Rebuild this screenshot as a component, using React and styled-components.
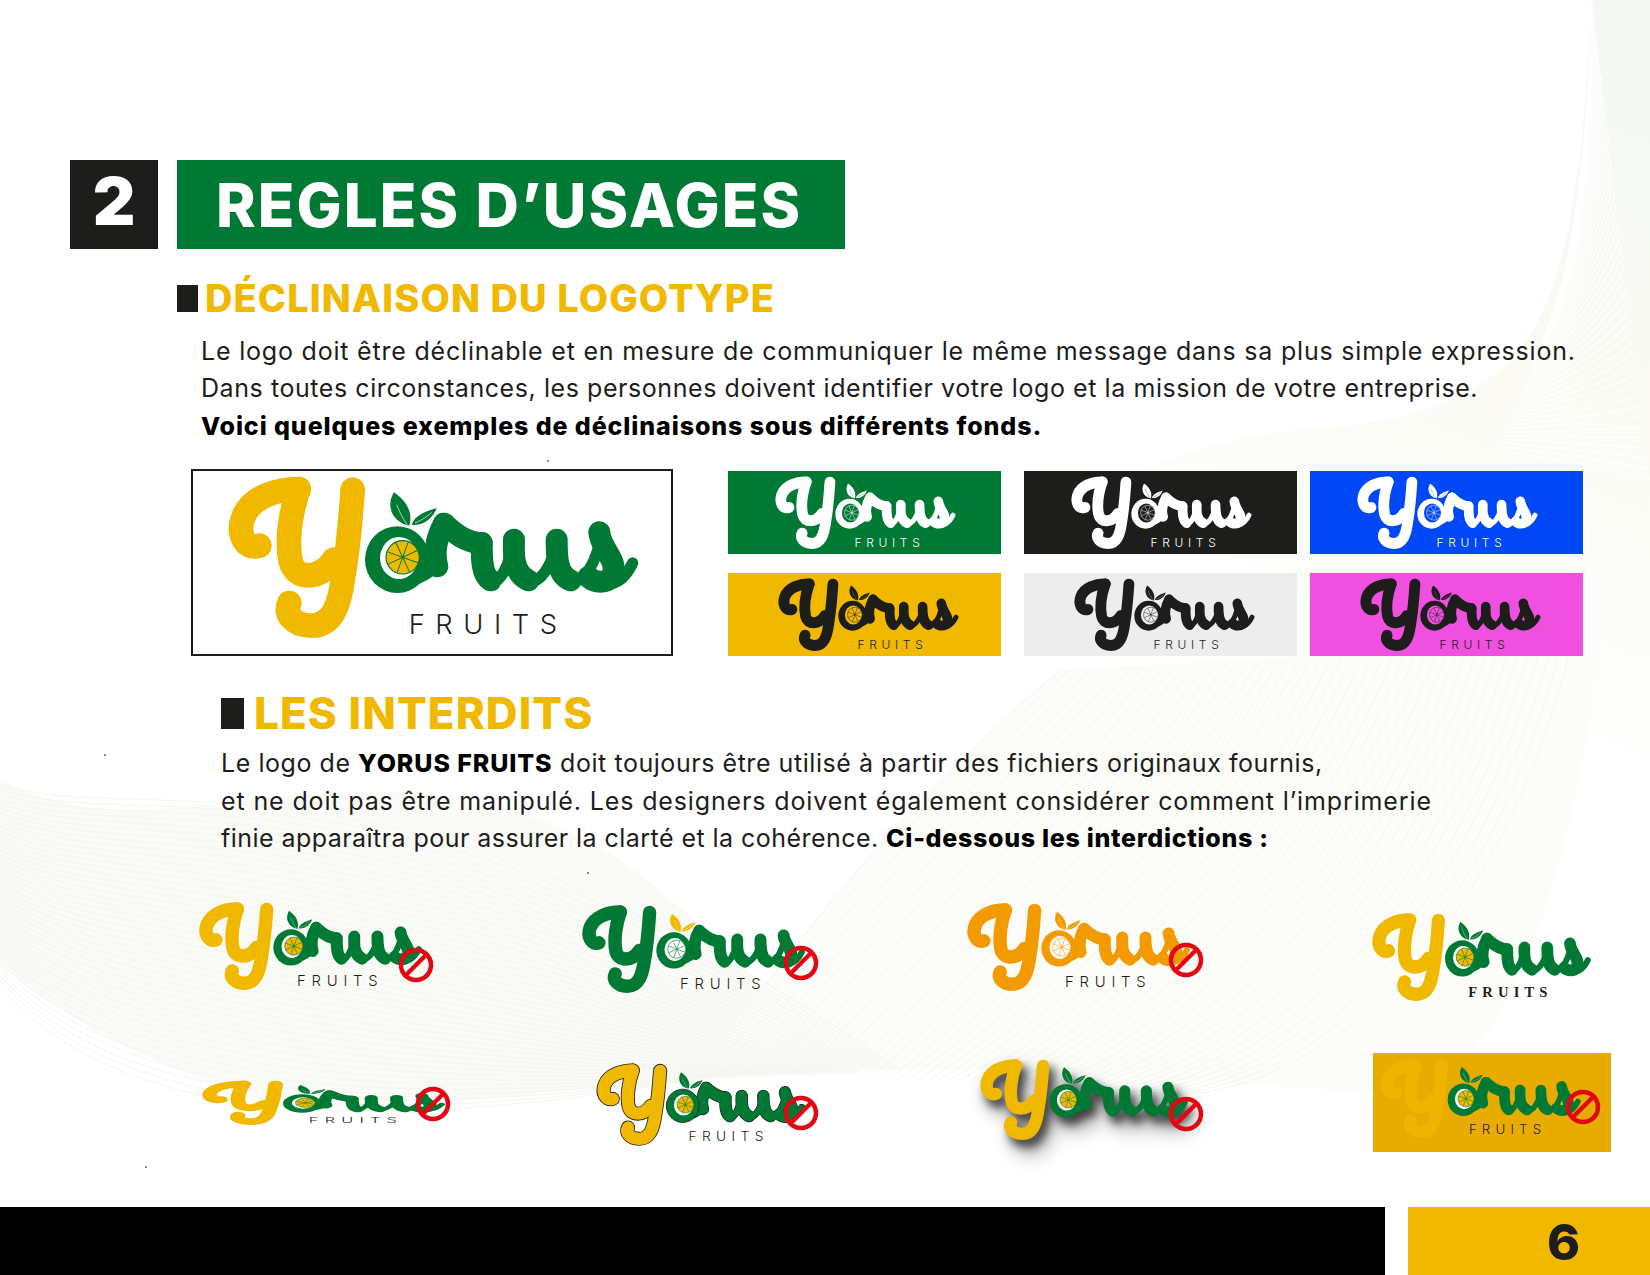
import React from "react";
import styled, { createGlobalStyle } from "styled-components";

const GREEN = "#007934";
const YELLOW = "#f0b900";
const INK = "#1d1d1b";

const GlobalStyle = createGlobalStyle`
  html, body {
    margin: 0;
    padding: 0;
    background: #fff;
  }
`;

const Page = styled.div`
  position: relative;
  width: 1650px;
  height: 1275px;
  overflow: hidden;
  background: #fff;
  color: ${INK};
  font-family: Inter, "Liberation Sans", sans-serif;
  display: flex;
  flex-direction: column;
  padding-top: 160px;
  box-sizing: border-box;
`;

const Backdrop = styled.svg`
  position: absolute;
  inset: 0;
  width: 1650px;
  height: 1275px;
`;

const Speck = styled.i`
  position: absolute;
  left: ${(p) => p.$x}px;
  top: ${(p) => p.$y}px;
  width: 2px;
  height: 2px;
  background: #8a8a8a;
`;

const Content = styled.div`
  position: relative;
  display: flex;
  flex-direction: column;
  flex: 1;
`;

const Header = styled.header`
  display: flex;
  gap: 19px;
  margin-left: 70px;
`;

const NumberBox = styled.div`
  width: 88px;
  height: 89px;
  background: ${INK};
  color: #fff;
  font-size: 66px;
  font-weight: 900;
  line-height: 82px;
  text-align: center;
`;

const TitleBar = styled.h1`
  width: 668px;
  height: 89px;
  margin: 0;
  padding-left: 39px;
  box-sizing: border-box;
  background: ${GREEN};
  color: #fff;
  font-size: 60px;
  font-weight: 800;
  line-height: 91px;
  letter-spacing: 2.1px;
  white-space: nowrap;
`;

const SectionTitle = styled.h2`
  display: flex;
  align-items: center;
  gap: ${(p) => p.$gap}px;
  margin: ${(p) => p.$top}px 0 0 ${(p) => p.$left}px;
  color: ${YELLOW};
  font-size: ${(p) => p.$size}px;
  font-weight: 800;
  line-height: 44px;
  letter-spacing: ${(p) => p.$spacing}px;
  white-space: nowrap;
  &::before {
    content: "";
    width: ${(p) => p.$mark}px;
    height: ${(p) => p.$markH}px;
    background: ${INK};
  }
`;

const Copy = styled.div`
  margin: ${(p) => p.$top}px 0 0 ${(p) => p.$left}px;
  font-size: 25px;
  line-height: 37.4px;
  white-space: nowrap;
`;

const Line = styled.div`
  letter-spacing: ${(p) => p.$sp ?? 0.55}px;
`;

const Strong = styled.b`
  color: #000;
  font-weight: 800;
  letter-spacing: ${(p) => p.$sp ?? 0.9}px;
`;

const Showcase = styled.section`
  display: flex;
  margin: 24px 0 0 191px;
  gap: 55px;
  align-items: flex-start;
`;

const MainLogoBox = styled.div`
  width: 482px;
  height: 187px;
  box-sizing: border-box;
  border: 2px solid ${INK};
  background: #fff;
  padding: 7px 0 0 37px;
`;

const TileGrid = styled.div`
  display: grid;
  grid-template-columns: 296px 286px 273px;
  grid-auto-rows: 83px;
  row-gap: 19px;
  margin-top: 2px;
`;

const Tile = styled.div`
  width: 273px;
  display: flex;
  align-items: center;
  justify-content: center;
  background: ${(p) => p.$bg};
  padding-left: ${(p) => p.$shift}px;
  box-sizing: border-box;
`;

const Interdits = styled.section`
  display: flex;
  flex-direction: column;
  margin: 35px 0 0 200px;
`;

const LogoRow = styled.div`
  display: grid;
  grid-template-columns: 383px 385px 405px 277px;
  margin-top: ${(p) => p.$top}px;
`;

const LogoCell = styled.div`
  position: relative;
  margin: ${(p) => p.$y}px 0 0 ${(p) => p.$x}px;
  width: max-content;
`;

const BoxedCell = styled(LogoCell)`
  width: 238px;
  height: 99px;
  box-sizing: border-box;
  padding: 7px 0 0 9px;
  background: #e8ac00;
`;

const SignSvg = styled.svg`
  position: absolute;
  left: ${(p) => p.$x}px;
  top: ${(p) => p.$y}px;
  width: 36px;
  height: 36px;
`;

const LogoSvg = styled.svg`
  display: block;
  width: ${(p) => p.$w}px;
  height: ${(p) => p.$h}px;
  overflow: visible;
  filter: ${(p) =>
    p.$shadow
      ? "drop-shadow(5px 7px 4px rgba(0,0,0,.6)) drop-shadow(5px 9px 8px rgba(0,0,0,.4))"
      : "none"};
`;

const Footer = styled.footer`
  position: absolute;
  left: 0;
  right: 0;
  bottom: 0;
  height: 68px;
  display: flex;
  gap: 23px;
`;

const FooterBar = styled.div`
  width: 1385px;
  background: #000;
`;

const PageNumber = styled.div`
  flex: 1;
  background: ${YELLOW};
  color: ${INK};
  font-size: 50px;
  font-weight: 800;
  line-height: 70px;
  padding-left: 139px;
`;

const fan = (a, b, n) =>
  Array.from({ length: n }, (_, i) => {
    const t = i / (n - 1);
    const p = a.map((v, k) => (v + (b[k] - v) * t).toFixed(1));
    return `M${p[0]} ${p[1]} C${p[2]} ${p[3]} ${p[4]} ${p[5]} ${p[6]} ${p[7]}`;
  }).join(" ");

function WaveBackdrop() {
  return (
    <Backdrop viewBox="0 0 1650 1275" aria-hidden="true">
      <defs>
        <linearGradient id="cornerFill" x1="0.8" y1="0" x2="0.5" y2="1">
          <stop offset="0" stopColor="#f3f8f4" />
          <stop offset="0.45" stopColor="#fbfaf3" />
          <stop offset="1" stopColor="#ffffff" />
        </linearGradient>
      </defs>
      <path
        d="M1592 0 C1585 130 1575 280 1520 350 C1470 410 1380 425 1300 430 C1200 440 1140 470 1100 490 L1650 760 L1650 0 Z"
        fill="url(#cornerFill)"
      />
      <path
        d="M0 780 C60 810 120 815 200 805 C340 790 480 770 620 860 C700 915 780 1010 860 1075 C640 1075 480 1105 380 1105 C250 1120 90 1040 0 965 Z"
        fill="#fafbf7"
      />
      <path
        d="M1060 670 C940 770 820 900 700 1072 C900 1060 1200 1080 1400 1095 C1500 1080 1570 900 1600 640 Z"
        fill="#fcfcf8"
      />
      <path d={fan([1592, 0, 1590, 100, 1580, 200, 1562, 290], [1650, 480, 1620, 470, 1560, 460, 1500, 450], 46)} fill="none" stroke="#ffffff" strokeWidth="1.2" />
      <path d={fan([0, 785, 150, 830, 400, 720, 900, 1070], [0, 985, 80, 1080, 250, 1160, 720, 1075], 44)} fill="none" stroke="#f3f6f1" strokeWidth="1" />
      <path d={fan([1060, 670, 940, 770, 820, 900, 710, 1065], [1570, 650, 1510, 900, 1350, 1085, 1180, 1095], 50)} fill="none" stroke="#f4f7f0" strokeWidth="1" />
    </Backdrop>
  );
}

const SPOKES = [0, 45, 90, 135];

// yellow Y, green "orus", fruit in the bowl of the o. The artwork is drawn in
// the px of the big logo x3, the small ones just scale down.
function Logo({
  w = 220,
  h = 87,
  first = YELLOW,
  body = GREEN,
  leaf = GREEN,
  hole = "#fff",
  fruit = YELLOW,
  spoke = GREEN,
  label = INK,
  labelY = 512,
  outline,
  shadow,
  serif,
  noLabel,
}) {
  const yPaths = (
    <>
      <path d="M238 258 C192 272 172 218 190 172 C214 112 290 88 356 88" />
      <path d="M356 88 C334 150 318 240 332 305 C346 362 420 362 462 300" />
      <path d="M518 90 C512 180 502 280 490 350 C478 440 456 498 394 498 C340 498 312 462 328 430" />
    </>
  );
  const heavy = (
    <>
      <path d="M772 320 C760 280 770 230 792 192" />
      <path d="M792 192 C815 212 850 248 905 250" />
      <path d="M905 250 C905 300 905 345 932 362" />
      <path d="M1002 240 C1000 290 1000 340 1045 362" />
      <path d="M1130 240 C1130 290 1130 345 1172 362" />
      <path d="M1258 218 C1262 270 1320 305 1295 350 C1280 372 1245 370 1225 352" />
    </>
  );
  const thin = (
    <>
      <path d="M650 368 C700 368 750 345 772 312" />
      <path d="M932 368 C962 368 986 320 1000 250" />
      <path d="M1045 368 C1082 368 1115 320 1130 250" />
      <path d="M1172 368 C1207 366 1237 330 1258 255" />
      <path d="M1295 372 C1325 365 1345 337 1358 310" />
    </>
  );

  return (
    <LogoSvg
      viewBox="150 55 1215 480"
      preserveAspectRatio="none"
      $w={w}
      $h={h}
      $shadow={shadow}
      role="img"
      aria-label="Yorus Fruits"
    >
      <g fill="none" strokeLinecap="round" strokeLinejoin="round">
        {outline && (
          <>
            <g stroke="#222" strokeWidth="84">{yPaths}</g>
            <g stroke="#222" strokeWidth="74">{heavy}</g>
            <g stroke="#222" strokeWidth="42">{thin}</g>
          </>
        )}
        <g stroke={first} strokeWidth="74">{yPaths}</g>
        <g stroke={body} strokeWidth="66">{heavy}</g>
        <g stroke={body} strokeWidth="34">{thin}</g>
      </g>
      <ellipse
        cx="652"
        cy="300"
        rx="97"
        ry="100"
        fill={body}
        stroke={outline ? "#222" : "none"}
        strokeWidth={outline ? 5 : 0}
      />
      <path d="M688 198 C640 190 615 140 642 98 C680 125 700 160 688 198 Z" fill={leaf} />
      <path d="M695 195 C705 165 740 155 770 145 C760 175 730 200 695 195 Z" fill={leaf} />
      <path d="M650 135 C660 160 670 180 682 195 M705 190 C725 182 740 172 755 158" fill="none" stroke={hole} strokeWidth="2" />
      <ellipse cx="657" cy="295" rx="57" ry="63" fill={hole} />
      <circle cx="668" cy="293" r="50" fill={fruit} stroke={spoke} strokeWidth="3.5" />
      <g stroke={spoke} strokeWidth="3">
        {SPOKES.map((a) => (
          <line key={a} x1="620" y1="293" x2="716" y2="293" transform={`rotate(${a + 20} 668 293)`} />
        ))}
      </g>
      {!noLabel && (
        <text
          x="686"
          y={labelY}
          textLength="445"
          fontSize="82"
          fontWeight={serif ? 700 : 300}
          fontFamily={serif ? '"Liberation Serif", serif' : 'Inter, "Liberation Sans", sans-serif'}
          fill={label}
        >
          FRUITS
        </text>
      )}
    </LogoSvg>
  );
}

function NoSign({ x, y }) {
  return (
    <SignSvg viewBox="0 0 36 36" $x={x} $y={y} aria-hidden="true">
      <circle cx="18" cy="18" r="15" fill="none" stroke="#e30613" strokeWidth="4.5" />
      <line x1="8" y1="28" x2="28" y2="8" stroke="#e30613" strokeWidth="4.5" />
    </SignSvg>
  );
}

const TILES = [
  { bg: GREEN, ink: "#fff", shift: 0 },
  { bg: INK, ink: "#fff", shift: 0 },
  { bg: "#0047f5", ink: "#fff", shift: 0 },
  { bg: YELLOW, ink: INK, shift: 6 },
  { bg: "#ededed", ink: INK, shift: 6 },
  { bg: "#f050e0", ink: INK, shift: 6 },
];

export default function App() {
  return (
    <Page>
      <GlobalStyle />
      <WaveBackdrop />
      <Speck $x={547} $y={460} />
      <Speck $x={104} $y={754} />
      <Speck $x={587} $y={872} />
      <Speck $x={145} $y={1166} />
      <Content>
        <Header>
          <NumberBox>2</NumberBox>
          <TitleBar>REGLES D’USAGES</TitleBar>
        </Header>

        <SectionTitle $top={27} $left={177} $gap={7} $size={38} $spacing={1.1} $mark={21} $markH={27}>
          DÉCLINAISON DU LOGOTYPE
        </SectionTitle>
        <Copy $top={13} $left={201}>
          <Line $sp={0.8}>Le logo doit être déclinable et en mesure de communiquer le même message dans sa plus simple expression.</Line>
          <Line $sp={0.57}>Dans toutes circonstances, les personnes doivent identifier votre logo et la mission de votre entreprise.</Line>
          <Line>
            <Strong>Voici quelques exemples de déclinaisons sous différents fonds.</Strong>
          </Line>
        </Copy>

        <Showcase>
          <MainLogoBox>
            <Logo w={405} h={160} labelY={524} />
          </MainLogoBox>
          <TileGrid>
            {TILES.map((t) => (
              <Tile key={t.bg} $bg={t.bg} $shift={t.shift}>
                <Logo w={178} h={72} first={t.ink} body={t.ink} leaf={t.ink} hole={t.bg} fruit={t.bg} spoke={t.ink} label={t.ink} labelY={522} />
              </Tile>
            ))}
          </TileGrid>
        </Showcase>

        <Interdits>
          <SectionTitle $top={0} $left={21} $gap={10} $size={44} $spacing={1.05} $mark={23} $markH={31}>
            LES INTERDITS
          </SectionTitle>
          <Copy $top={10} $left={21}>
            <Line>
              Le logo de <Strong>YORUS FRUITS</Strong> doit toujours être utilisé à partir des fichiers originaux fournis,
            </Line>
            <Line $sp={0.87}>et ne doit pas être manipulé. Les designers doivent également considérer comment l’imprimerie</Line>
            <Line $sp={0.45}>
              finie apparaîtra pour assurer la clarté et la cohérence. <Strong $sp={0.7}>Ci-dessous les interdictions :</Strong>
            </Line>
          </Copy>

          <LogoRow $top={46}>
            <LogoCell $x={0} $y={0}>
              <Logo />
              <NoSign x={198} y={44} />
            </LogoCell>
            <LogoCell $x={0} $y={3}>
              <Logo first={GREEN} leaf={YELLOW} fruit="#fff" />
              <NoSign x={200} y={39} />
            </LogoCell>
            <LogoCell $x={0} $y={1}>
              <Logo first="#f39a00" body="#f39a00" leaf="#f39a00" fruit="#fff" spoke="#f39a00" />
              <NoSign x={200} y={38} />
            </LogoCell>
            <LogoCell $x={0} $y={11}>
              <Logo w={216} serif />
            </LogoCell>
          </LogoRow>

          <LogoRow $top={52}>
            <LogoCell $x={3} $y={28}>
              <Logo w={240} h={44} />
              <NoSign x={212} y={5} />
            </LogoCell>
            <LogoCell $x={15} $y={12}>
              <Logo w={205} h={80} outline />
              <NoSign x={185} y={30} />
            </LogoCell>
            <LogoCell $x={13} $y={7}>
              <Logo w={205} h={80} shadow noLabel />
              <NoSign x={187} y={36} />
            </LogoCell>
            <BoxedCell $x={0} $y={0}>
              <Logo w={197} h={78} first="#f0b400" />
              <NoSign x={192} y={36} />
            </BoxedCell>
          </LogoRow>
        </Interdits>

        <Footer>
          <FooterBar />
          <PageNumber>6</PageNumber>
        </Footer>
      </Content>
    </Page>
  );
}
